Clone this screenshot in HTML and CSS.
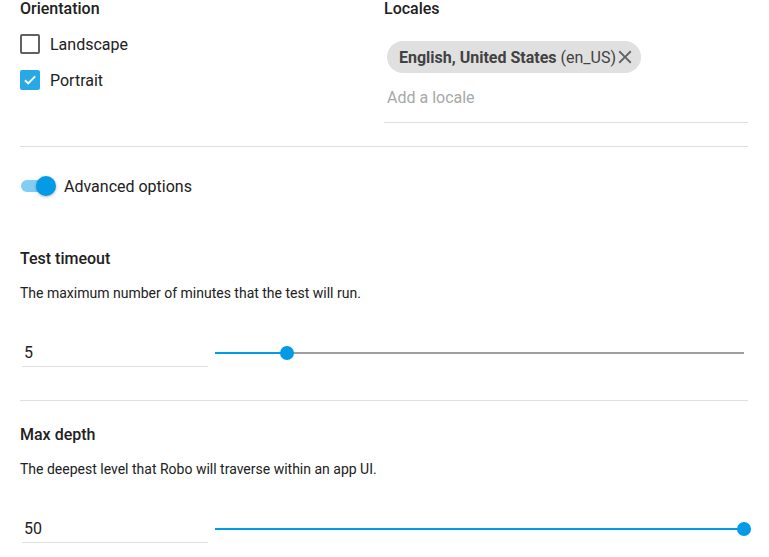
FILE: index.html
```html
<!DOCTYPE html>
<html lang="en">
<head>
<meta charset="utf-8">
<title>Robo test options</title>
<link rel="stylesheet" href="styles.css">
</head>
<body>
<div class="page">
  <div class="top">
    <section class="col">
      <h3 class="label">Orientation</h3>
      <label class="check"><span class="box"></span><span>Landscape</span></label>
      <label class="check"><span class="box on"><svg viewBox="0 0 20 20" width="20" height="20"><path d="M5 10.2l3.2 3.2L15.2 6.4" fill="none" stroke="#fff" stroke-width="2"/></svg></span><span>Portrait</span></label>
    </section>
    <section class="col">
      <h3 class="label">Locales</h3>
      <div class="chip-field">
        <span class="chip"><b>English, United States</b>&nbsp;(en_US)<svg class="x" viewBox="0 0 24 24" width="22" height="22"><path d="M19 6.41L17.59 5 12 10.59 6.41 5 5 6.41 10.59 12 5 17.59 6.41 19 12 13.41 17.59 19 19 17.59 13.41 12z" fill="#616161"/></svg></span>
        <div class="placeholder">Add a locale</div>
      </div>
    </section>
  </div>
  <div class="divider first"></div>
  <div class="toggle-row">
    <span class="switch"><span class="track"></span><span class="thumb"></span></span>
    <span>Advanced options</span>
  </div>
  <section class="setting s1">
    <h3 class="title">Test timeout</h3>
    <p class="desc">The maximum number of minutes that the test will run.</p>
    <div class="slider-row">
      <div class="num">5</div>
      <div class="slider"><div class="fill" style="width:13.6%"></div><div class="knob" style="left:13.6%"></div></div>
    </div>
  </section>
  <div class="divider second"></div>
  <section class="setting s2">
    <h3 class="title">Max depth</h3>
    <p class="desc">The deepest level that Robo will traverse within an app UI.</p>
    <div class="slider-row">
      <div class="num">50</div>
      <div class="slider"><div class="fill" style="width:100%"></div><div class="knob" style="left:100%"></div></div>
    </div>
  </section>
</div>
</body>
</html>
```
FILE: styles.css
```css
* { box-sizing: border-box; }
html, body { margin: 0; padding: 0; background: #fff; }
body {
  font-family: Roboto, "Liberation Sans", Arial, sans-serif;
  color: #212121;
  font-size: 16px;
}
.page { width: 748px; padding-left: 20px; }
.top { display: grid; grid-template-columns: 364px 364px; }
.label {
  margin: 0;
  font-size: 16px;
  font-weight: 500;
  line-height: 18px;
  color: #212121;
}
.col:first-child .check:first-of-type { margin-top: 8px; }
.check {
  display: flex;
  align-items: center;
  height: 36px;
  gap: 10px;
  font-size: 16px;
  color: #212121;
}
.box {
  width: 20px;
  height: 20px;
  border: 2px solid #616161;
  border-radius: 2px;
  display: flex;
  align-items: center;
  justify-content: center;
}
.box.on { background: #29a8e8; border-color: #29a8e8; }
.box.on svg { flex: none; }
.chip-field {
  margin-top: 23px;
  padding-bottom: 14px;
  border-bottom: 1px solid #e0e0e0;
}
.chip {
  display: inline-flex;
  align-items: center;
  height: 32px;
  margin-left: 3px;
  padding: 0 5px 0 12px;
  border-radius: 16px;
  background: #e0e0e0;
  color: #424242;
  font-size: 16px;
}
.chip b { font-weight: 700; }
.chip .x { margin-left: -2px; }
.placeholder {
  margin-top: 15px;
  margin-left: 3px;
  line-height: 20px;
  color: #a8a8a8;
  font-size: 16px;
}
.divider { height: 1px; background: #e0e0e0; }
.divider.first { margin-top: 23px; }
.divider.second { margin-top: 33px; }
.toggle-row {
  display: flex;
  align-items: center;
  height: 20px;
  margin-top: 29px;
  gap: 8px;
  font-size: 16px;
}
.switch { position: relative; width: 36px; height: 20px; flex: none; }
.switch .track {
  position: absolute;
  left: 1px; top: 4px;
  width: 34px; height: 12px;
  border-radius: 6px;
  background: #81cdf3;
}
.switch .thumb {
  position: absolute;
  left: 16px; top: 0;
  width: 20px; height: 20px;
  border-radius: 50%;
  background: #039be5;
  box-shadow: 0 1px 3px rgba(0,0,0,0.3);
}
.setting .title {
  margin: 0;
  font-size: 16px;
  font-weight: 500;
  line-height: 20px;
}
.s1 .title { margin-top: 53px; }
.s2 .title { margin-top: 24px; }
.desc {
  margin: 14px 0 0;
  font-size: 14px;
  line-height: 20px;
  color: #212121;
}
.s2 .desc { margin-top: 14px; }
.slider-row {
  display: flex;
  align-items: flex-end;
  margin-top: 36px;
}
.s2 .slider-row { margin-top: 36px; }
.num {
  width: 186px;
  margin-left: 2px;
  padding: 4px 0 3px 2px;
  line-height: 20px;
  font-size: 16px;
  border-bottom: 1px solid #e0e0e0;
  flex: none;
}
.slider {
  position: relative;
  height: 2px;
  margin-left: 7px;
  width: 529px;
  margin-bottom: 13px;
  background: #9e9e9e;
}
.slider .fill { height: 2px; background: #039be5; }
.slider .knob {
  position: absolute;
  top: -6px;
  width: 14px; height: 14px;
  margin-left: -7px;
  border-radius: 50%;
  background: #039be5;
}
```
